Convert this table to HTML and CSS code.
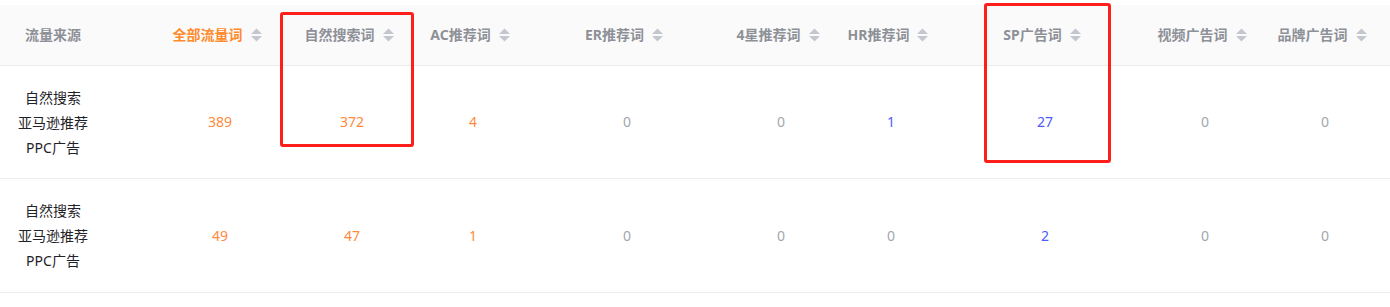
FILE: index.html
```html
<!DOCTYPE html>
<html lang="zh-CN">
<head>
<meta charset="utf-8">
<title>流量来源</title>
<link rel="stylesheet" href="styles.css">
</head>
<body>
<div class="page">
  <div class="table">
    <div class="row head">
      <div class="cell first"><span class="th">流量来源</span></div>
      <div class="cell"><span class="th active">全部流量词</span><svg class="sort" viewBox="0 0 11 14"><polygon points="0,6 5.5,0.5 11,6"/><polygon points="0,8 5.5,13.5 11,8"/></svg></div>
      <div class="cell"><span class="th">自然搜索词</span><svg class="sort" viewBox="0 0 11 14"><polygon points="0,6 5.5,0.5 11,6"/><polygon points="0,8 5.5,13.5 11,8"/></svg></div>
      <div class="cell"><span class="th">AC推荐词</span><svg class="sort" viewBox="0 0 11 14"><polygon points="0,6 5.5,0.5 11,6"/><polygon points="0,8 5.5,13.5 11,8"/></svg></div>
      <div class="cell"><span class="th">ER推荐词</span><svg class="sort" viewBox="0 0 11 14"><polygon points="0,6 5.5,0.5 11,6"/><polygon points="0,8 5.5,13.5 11,8"/></svg></div>
      <div class="cell"><span class="th">4星推荐词</span><svg class="sort" viewBox="0 0 11 14"><polygon points="0,6 5.5,0.5 11,6"/><polygon points="0,8 5.5,13.5 11,8"/></svg></div>
      <div class="cell"><span class="th">HR推荐词</span><svg class="sort" viewBox="0 0 11 14"><polygon points="0,6 5.5,0.5 11,6"/><polygon points="0,8 5.5,13.5 11,8"/></svg></div>
      <div class="cell"><span class="th">SP广告词</span><svg class="sort" viewBox="0 0 11 14"><polygon points="0,6 5.5,0.5 11,6"/><polygon points="0,8 5.5,13.5 11,8"/></svg></div>
      <div class="cell"><span class="th">视频广告词</span><svg class="sort" viewBox="0 0 11 14"><polygon points="0,6 5.5,0.5 11,6"/><polygon points="0,8 5.5,13.5 11,8"/></svg></div>
      <div class="cell"><span class="th">品牌广告词</span><svg class="sort" viewBox="0 0 11 14"><polygon points="0,6 5.5,0.5 11,6"/><polygon points="0,8 5.5,13.5 11,8"/></svg></div>
    </div>
    <div class="row body">
      <div class="cell first"><div class="src">自然搜索<br>亚马逊推荐<br>PPC广告</div></div>
      <div class="cell"><span class="num orange">389</span></div>
      <div class="cell"><span class="num orange">372</span></div>
      <div class="cell"><span class="num orange">4</span></div>
      <div class="cell"><span class="num gray">0</span></div>
      <div class="cell"><span class="num gray">0</span></div>
      <div class="cell"><span class="num blue">1</span></div>
      <div class="cell"><span class="num blue">27</span></div>
      <div class="cell"><span class="num gray">0</span></div>
      <div class="cell"><span class="num gray">0</span></div>
    </div>
    <div class="row body">
      <div class="cell first"><div class="src">自然搜索<br>亚马逊推荐<br>PPC广告</div></div>
      <div class="cell"><span class="num orange">49</span></div>
      <div class="cell"><span class="num orange">47</span></div>
      <div class="cell"><span class="num orange">1</span></div>
      <div class="cell"><span class="num gray">0</span></div>
      <div class="cell"><span class="num gray">0</span></div>
      <div class="cell"><span class="num gray">0</span></div>
      <div class="cell"><span class="num blue">2</span></div>
      <div class="cell"><span class="num gray">0</span></div>
      <div class="cell"><span class="num gray">0</span></div>
    </div>
  </div>
  <div class="mark mark-a"></div>
  <div class="mark mark-b"></div>
</div>
</body>
</html>
```

FILE: styles.css
```css
* { box-sizing: border-box; }
html, body {
  margin: 0;
  padding: 0;
  background: #ffffff;
}
body {
  font-family: "Noto Sans", "Noto Sans CJK SC", sans-serif;
  font-size: 14px;
  color: #222;
}
.page {
  position: relative;
  width: 1390px;
  height: 307px;
  padding-top: 5px;
  overflow: hidden;
}
.table {
  width: 1390px;
}
.row {
  display: grid;
  grid-template-columns: 151px 132px 132px 110px 198px 110px 110px 198px 122px 118px 9px;
}
.head {
  height: 61px;
  background: #fafafa;
  border-bottom: 1px solid #ececec;
}
.body {
  height: 113px;
  border-bottom: 1px solid #ebebf2;
}
.body + .body {
  height: 114px;
}
.cell {
  display: flex;
  align-items: center;
  justify-content: center;
}
.cell.first {
  padding-right: 45px;
}
.th {
  font-weight: 700;
  color: #8e9098;
  line-height: 20px;
}
.th.active {
  color: #ff8b2c;
}
.sort {
  width: 11px;
  height: 14px;
  margin-left: 8px;
  fill: #c4c7cf;
  flex: none;
}
.src {
  text-align: center;
  line-height: 25px;
  color: #1f2329;
}
.num {
  padding-left: 6px;
  line-height: 20px;
}
.orange { color: #ff8a3d; }
.gray { color: #a3a6ad; }
.blue { color: #4d5cff; }
.mark {
  position: absolute;
  border: 3px solid #ff1f1a;
  border-radius: 3px;
}
.mark-a {
  left: 280px;
  top: 12px;
  width: 134px;
  height: 135px;
}
.mark-b {
  left: 984px;
  top: 3px;
  width: 127px;
  height: 160px;
}
```
